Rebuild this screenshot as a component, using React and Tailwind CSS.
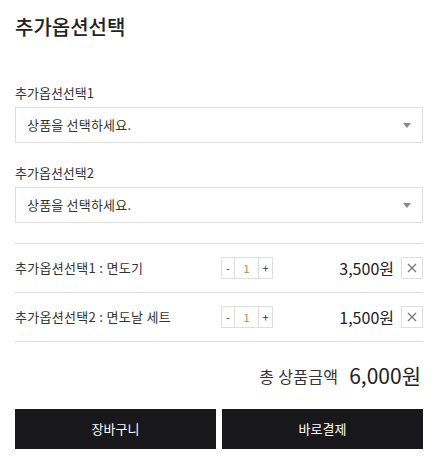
const font = { fontFamily: '"Noto Sans CJK KR", "Noto Sans", sans-serif' };

const items = [
  { name: "추가옵션선택1 : 면도기", qty: 1, price: "3,500원" },
  { name: "추가옵션선택2 : 면도날 세트", qty: 1, price: "1,500원" },
];

function SelectBox({ label }) {
  return (
    <div>
      <div className="h-[18px] text-[13px] leading-[18px] text-[#333]">{label}</div>
      <div className="mt-[5px] flex h-[36px] items-center justify-between border border-[#ddd] px-[11px]">
        <span className="text-[13px] tracking-[0.2px] text-[#333]">상품을 선택하세요.</span>
        <span className="h-0 w-0 border-x-[4px] border-t-[5px] border-x-transparent border-t-[#888]" />
      </div>
    </div>
  );
}

export default function App() {
  return (
    <div className="w-[435px] bg-white pl-[15px] pr-[12px]" style={font}>
      <h1 className="pt-[12px] text-[20px] font-medium leading-[30px] text-[#222]">
        추가옵션선택
      </h1>

      <div className="mt-[42px] flex flex-col gap-[21px]">
        <SelectBox label="추가옵션선택1" />
        <SelectBox label="추가옵션선택2" />
      </div>

      <div className="mt-[20px] border-b border-[#ddd]">
        {items.map((item) => (
          <div
            key={item.name}
            className="flex h-[49px] items-center border-t border-[#ddd]"
          >
            <span className="w-[206px] text-[13px] tracking-[0.3px] text-[#333]">{item.name}</span>
            <div className="flex h-[22px] border border-[#ddd] text-[11px] text-[#333]">
              <button className="w-[12px] leading-[20px]">-</button>
              <span className="w-[25px] border-x border-[#ddd] text-center leading-[20px] text-[#b08850]">
                {item.qty}
              </span>
              <button className="w-[13px] leading-[20px]">+</button>
            </div>
            <span className="ml-auto text-[16px] text-[#222]">{item.price}</span>
            <button className="ml-[7px] flex h-[22px] w-[22px] items-center justify-center border border-[#ddd]">
              <svg width="10" height="10" viewBox="0 0 10 10">
                <path d="M1 1 L9 9 M9 1 L1 9" stroke="#777" strokeWidth="1.3" />
              </svg>
            </button>
          </div>
        ))}
      </div>

      <div className="mt-[18px] flex items-center justify-end gap-[11px] pr-[2px]">
        <span className="text-[16px] tracking-[0.3px] text-[#333]">총 상품금액</span>
        <span className="text-[21px] text-[#222]">6,000원</span>
      </div>

      <div className="mt-[17px] flex gap-[6px] pb-[17px]">
        <button className="h-[40px] flex-1 bg-[#18181a] text-[13px] text-white">장바구니</button>
        <button className="h-[40px] flex-1 bg-[#18181a] text-[13px] text-white">바로결제</button>
      </div>
    </div>
  );
}
